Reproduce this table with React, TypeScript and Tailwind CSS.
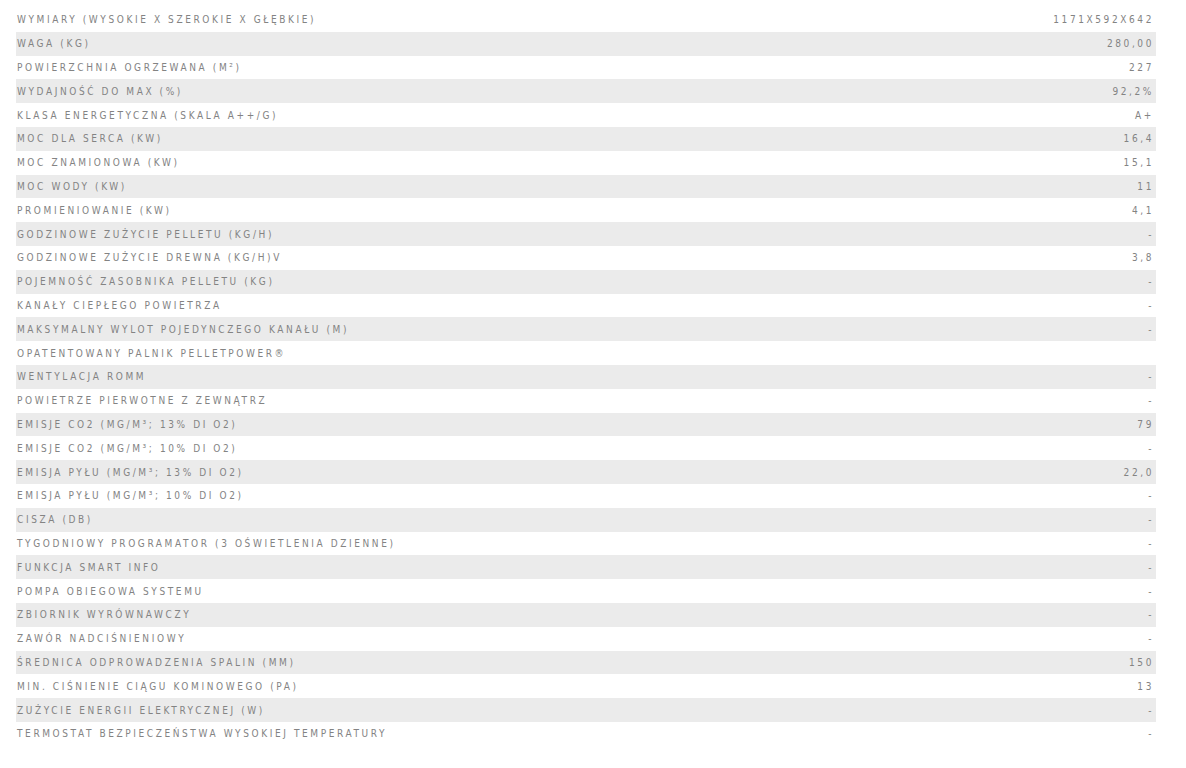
const SPECS: [string, string][] = [
  ["Wymiary (wysokie x szerokie x głębkie)", "1171x592x642"],
  ["Waga (kg)", "280,00"],
  ["Powierzchnia ogrzewana (m²)", "227"],
  ["Wydajność do max (%)", "92,2%"],
  ["Klasa energetyczna (skala A++/G)", "A+"],
  ["Moc dla serca (kW)", "16,4"],
  ["Moc znamionowa (kW)", "15,1"],
  ["Moc wody (kW)", "11"],
  ["Promieniowanie (kW)", "4,1"],
  ["Godzinowe zużycie pelletu (kg/h)", "-"],
  ["Godzinowe zużycie drewna (kg/h)v", "3,8"],
  ["Pojemność zasobnika pelletu (kg)", "-"],
  ["Kanały ciepłego powietrza", "-"],
  ["Maksymalny wylot pojedynczego kanału (m)", "-"],
  ["Opatentowany palnik PelletPower®", ""],
  ["Wentylacja Romm", "-"],
  ["Powietrze pierwotne z zewnątrz", "-"],
  ["Emisje CO2 (mg/m³; 13% di O2)", "79"],
  ["Emisje CO2 (mg/m³; 10% di O2)", "-"],
  ["Emisja pyłu (mg/m³; 13% di O2)", "22,0"],
  ["Emisja pyłu (mg/m³; 10% di O2)", "-"],
  ["Cisza (dB)", "-"],
  ["Tygodniowy programator (3 oświetlenia dzienne)", "-"],
  ["Funkcja Smart Info", "-"],
  ["Pompa obiegowa systemu", "-"],
  ["Zbiornik wyrównawczy", "-"],
  ["Zawór nadciśnieniowy", "-"],
  ["Średnica odprowadzenia spalin (mm)", "150"],
  ["Min. ciśnienie ciągu kominowego (Pa)", "13"],
  ["Zużycie energii elektrycznej (W)", "-"],
  ["Termostat bezpieczeństwa wysokiej temperatury", "-"],
];

export default function App() {
  return (
    <div className="min-h-screen w-full bg-white pt-[8px]">
      <div className="ml-4 w-[1140px] font-['Liberation_Sans_Narrow','DejaVu_Sans_Condensed','Liberation_Sans',sans-serif] text-[10px] uppercase tracking-[2.6px] text-[#838383]">
        {SPECS.map(([label, value]) => (
          <div
            key={label}
            className="flex h-[23.8px] items-center justify-between pl-[1px] pr-[2px] even:bg-[#ebebeb]"
          >
            <span>{label}</span>
            <span>{value}</span>
          </div>
        ))}
      </div>
    </div>
  );
}
